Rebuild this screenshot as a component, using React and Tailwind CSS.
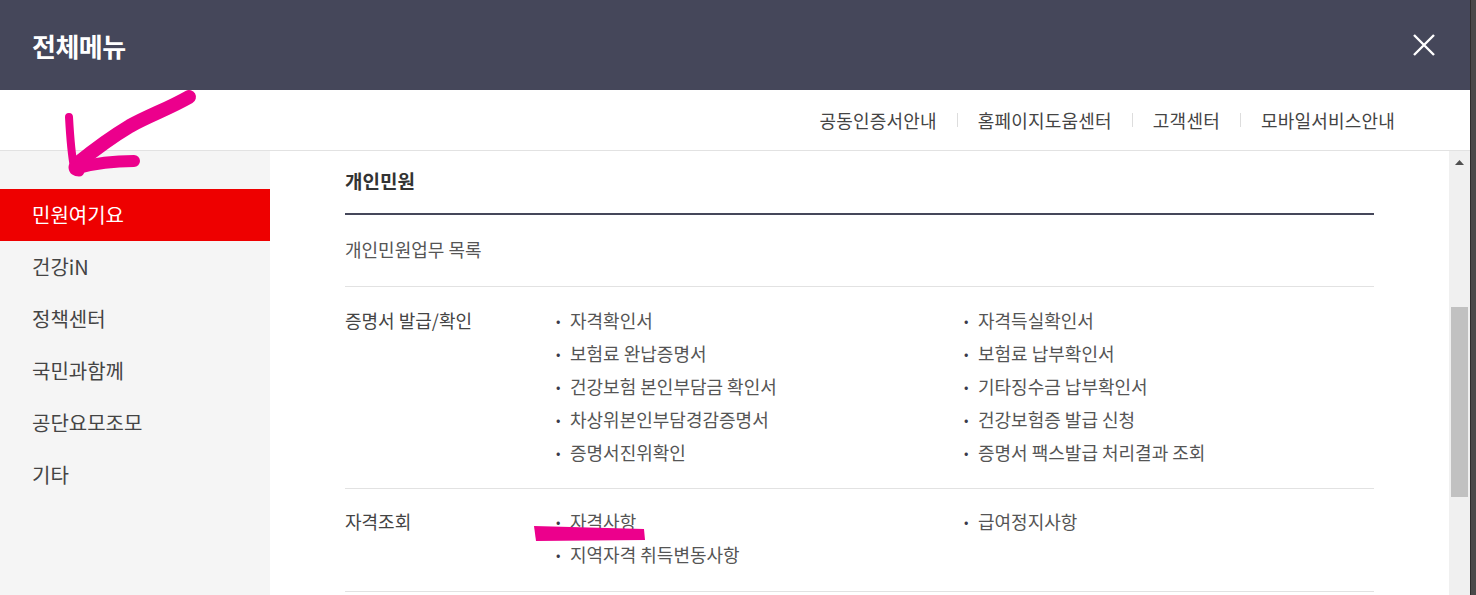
import React from 'react';

const font = { fontFamily: '"Noto Sans CJK KR", "Noto Sans", sans-serif' };

const topLinks = ['공동인증서안내', '홈페이지도움센터', '고객센터', '모바일서비스안내'];
const sideMenu = ['민원여기요', '건강iN', '정책센터', '국민과함께', '공단요모조모', '기타'];

const groups = [
  {
    title: '증명서 발급/확인',
    left: ['자격확인서', '보험료 완납증명서', '건강보험 본인부담금 확인서', '차상위본인부담경감증명서', '증명서진위확인'],
    right: ['자격득실확인서', '보험료 납부확인서', '기타징수금 납부확인서', '건강보험증 발급 신청', '증명서 팩스발급 처리결과 조회'],
    pad: 'pt-[17px] pb-[19px]',
  },
  {
    title: '자격조회',
    left: ['자격사항', '지역자격 취득변동사항'],
    right: ['급여정지사항'],
    pad: 'pt-[16px] pb-[20px]',
  },
];

const Item = ({ text }) => (
  <li className="flex items-center h-[33px] text-[18px] text-[#555]">
    <span className="w-[14px] text-[13px] text-[#3a3a4a]">•</span>
    <span>{text}</span>
  </li>
);

export default function App() {
  return (
    <div className="relative flex h-[595px] w-full overflow-hidden bg-white" style={font}>
      <div className="flex flex-col flex-1 min-w-0">
        {/* header */}
        <div className="flex items-center justify-between h-[90px] bg-[#45475a] pl-[32px] pr-[34px] shrink-0">
          <h1 className="text-[26px] font-bold text-white tracking-[-0.5px]">전체메뉴</h1>
          <svg width="24" height="24" viewBox="0 0 24 24">
            <path d="M2 2 L22 22 M22 2 L2 22" stroke="#fff" strokeWidth="2.4" />
          </svg>
        </div>

        {/* utility links */}
        <div className="flex items-center justify-end h-[61px] border-b border-[#e2e2e2] pr-[75px] shrink-0">
          {topLinks.map((t, i) => (
            <React.Fragment key={t}>
              {i > 0 && <span className="mx-[20px] h-[14px] w-px bg-[#dddddd]" />}
              <span className="text-[18px] text-[#444] tracking-[0.2px]">{t}</span>
            </React.Fragment>
          ))}
        </div>

        {/* body */}
        <div className="flex flex-1 min-h-0">
          <nav className="w-[270px] shrink-0 bg-[#f5f5f5] pt-[38px]">
            {sideMenu.map((m, i) => (
              <div
                key={m}
                className={`flex items-center h-[52px] pl-[32px] text-[20px] ${
                  i === 0 ? 'bg-[#ee0000] text-white' : 'text-[#444]'
                }`}
              >
                {m}
              </div>
            ))}
          </nav>

          <main className="flex-1 min-w-0 overflow-hidden px-[75px]">
            <div className="pt-[17px] pb-[19px] border-b-2 border-[#45475a]">
              <h2 className="text-[19px] leading-[26px] font-bold text-[#333]">개인민원</h2>
            </div>
            <div className="pt-[21px] pb-[24px] border-b border-[#e2e2e2]">
              <p className="text-[18px] leading-[26px] text-[#555]">개인민원업무 목록</p>
            </div>
            {groups.map((g) => (
              <div key={g.title} className={`flex border-b border-[#e2e2e2] ${g.pad}`}>
                <div className="w-[211px] shrink-0 text-[18px] leading-[33px] text-[#444]">{g.title}</div>
                <ul className="w-[408px] shrink-0">
                  {g.left.map((t) => (
                    <Item key={t} text={t} />
                  ))}
                </ul>
                <ul className="flex-1">
                  {g.right.map((t) => (
                    <Item key={t} text={t} />
                  ))}
                </ul>
              </div>
            ))}
          </main>

          {/* scrollbar */}
          <div className="w-[21px] shrink-0 bg-[#f0f0f0] flex flex-col items-center">
            <svg width="9" height="5" viewBox="0 0 9 5" className="mt-[9px]">
              <path d="M0 5 L4.5 0 L9 5 Z" fill="#505050" />
            </svg>
            <div className="mt-[142px] h-[190px] w-[17px] bg-[#c1c1c1]" />
          </div>
        </div>
      </div>

      {/* window frame edge */}
      <div className="w-[6px] shrink-0 bg-[#4a4a4a] border-l border-[#2e2e2e]" />

      {/* pink annotations */}
      <svg className="absolute left-0 top-0 pointer-events-none" width="1476" height="595">
        <g stroke="#ec008c" fill="none" strokeLinecap="round" strokeLinejoin="round">
          <path d="M189 97 C168 109 150 115 130 126 C110 138 94 150 78 163" strokeWidth="14" />
          <path d="M69 117 C70 135 71 152 74 167" strokeWidth="8" />
          <path d="M74 167 C74 170 76 171 79 171" strokeWidth="11" />
          <path d="M78 168 C96 163 114 161 134 161" strokeWidth="12" />
        </g>
        <path d="M534 526 L644 529 L645 540 L536 541 Z" fill="#ec008c" />
      </svg>
    </div>
  );
}
